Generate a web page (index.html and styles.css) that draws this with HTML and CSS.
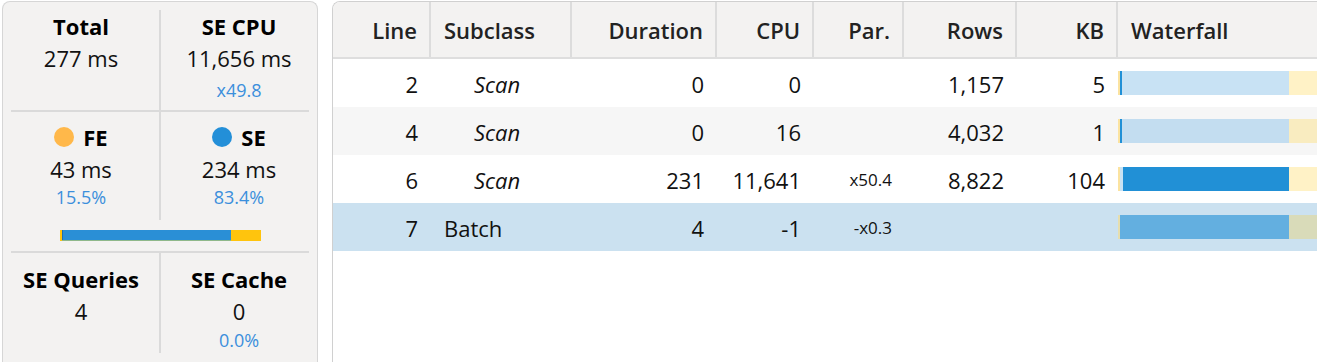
FILE: index.html
```html
<!DOCTYPE html>
<html lang="en">
<head>
<meta charset="utf-8">
<title>Server Timings</title>
<link rel="stylesheet" href="styles.css">
</head>
<body>
<div class="page">
  <section class="summary">
    <div class="stat-row row-top">
      <div class="stat">
        <div class="label">Total</div>
        <div class="value">277 ms</div>
      </div>
      <div class="stat">
        <div class="label">SE CPU</div>
        <div class="value">11,656 ms</div>
        <div class="sub sub-gap">x49.8</div>
      </div>
    </div>
    <div class="hsep"></div>
    <div class="stat-row row-mid">
      <div class="stat">
        <div class="label"><span class="dot dot-fe"></span>FE</div>
        <div class="value">43 ms</div>
        <div class="sub">15.5%</div>
      </div>
      <div class="stat">
        <div class="label"><span class="dot dot-se"></span>SE</div>
        <div class="value">234 ms</div>
        <div class="sub">83.4%</div>
      </div>
    </div>
    <div class="ratio">
      <span class="ratio-fe" style="width:2px"></span>
      <span class="ratio-se" style="width:169px"></span>
      <span class="ratio-fe ratio-rest"></span>
    </div>
    <div class="hsep"></div>
    <div class="stat-row row-bot">
      <div class="stat">
        <div class="label">SE Queries</div>
        <div class="value">4</div>
      </div>
      <div class="stat">
        <div class="label">SE Cache</div>
        <div class="value">0</div>
        <div class="sub sub-tight">0.0%</div>
      </div>
    </div>
  </section>

  <section class="grid-panel">
    <div class="thead">
      <div class="th num">Line</div>
      <div class="th">Subclass</div>
      <div class="th num">Duration</div>
      <div class="th num">CPU</div>
      <div class="th num">Par.</div>
      <div class="th num">Rows</div>
      <div class="th num">KB</div>
      <div class="th last">Waterfall</div>
    </div>

    <div class="tr">
      <div class="td num">2</div>
      <div class="td sub-scan">Scan</div>
      <div class="td num">0</div>
      <div class="td num">0</div>
      <div class="td num par"></div>
      <div class="td num">1,157</div>
      <div class="td num">5</div>
      <div class="td wfcell">
        <div class="wf"><span class="wf-fe" style="width:2px"></span><span class="wf-span" style="width:169px"><span class="wf-se" style="width:2px"></span></span></div>
      </div>
    </div>

    <div class="tr alt">
      <div class="td num">4</div>
      <div class="td sub-scan">Scan</div>
      <div class="td num">0</div>
      <div class="td num">16</div>
      <div class="td num par"></div>
      <div class="td num">4,032</div>
      <div class="td num">1</div>
      <div class="td wfcell">
        <div class="wf"><span class="wf-fe" style="width:2px"></span><span class="wf-span" style="width:169px"><span class="wf-se" style="width:2px"></span></span></div>
      </div>
    </div>

    <div class="tr">
      <div class="td num">6</div>
      <div class="td sub-scan">Scan</div>
      <div class="td num">231</div>
      <div class="td num">11,641</div>
      <div class="td num par">x50.4</div>
      <div class="td num">8,822</div>
      <div class="td num">104</div>
      <div class="td wfcell">
        <div class="wf"><span class="wf-fe" style="width:2px"></span><span class="wf-span" style="width:169px"><span class="wf-se" style="width:166px;margin-left:3px"></span></span></div>
      </div>
    </div>

    <div class="tr sel">
      <div class="td num">7</div>
      <div class="td">Batch</div>
      <div class="td num">4</div>
      <div class="td num">-1</div>
      <div class="td num par">-x0.3</div>
      <div class="td num"></div>
      <div class="td num"></div>
      <div class="td wfcell">
        <div class="wf"><span class="wf-fe" style="width:2px"></span><span class="wf-span" style="width:169px"></span></div>
      </div>
    </div>
  </section>
</div>
</body>
</html>
```

FILE: styles.css
```css
html, body {
  height: 100%;
}
body {
  margin: 0;
  padding: 1px 0 0 2px;
  box-sizing: border-box;
  background: #ffffff;
  font-family: "Open Sans", "Noto Sans", "DejaVu Sans", sans-serif;
  color: #111111;
  overflow: hidden;
}

.page {
  display: flex;
  align-items: flex-start;
  gap: 14px;
}

/* ---------- summary panel ---------- */
.summary {
  flex: none;
  width: 316px;
  height: 361px;
  box-sizing: border-box;
  border: 1px solid #d6d6d6;
  border-bottom: none;
  border-radius: 8px 8px 0 0;
  background: #f3f2f1;
}

.stat-row {
  display: flex;
}
.stat {
  flex: 1;
  text-align: center;
}
.stat + .stat {
  border-left: 2px solid #dadada;
}

.row-top { padding-top: 8px; }
.row-top .stat { padding-bottom: 8px; }
.row-mid .stat { padding-top: 9px; padding-bottom: 11px; }
.row-bot .stat { padding-top: 10px; padding-bottom: 1px; }

.label {
  font-size: 22px;
  line-height: 32px;
  font-weight: 700;
  color: #000;
  display: flex;
  justify-content: center;
  align-items: center;
  gap: 9px;
}
.value {
  font-size: 22px;
  line-height: 32px;
  color: #111;
}
.sub {
  font-size: 18px;
  line-height: 24px;
  color: #3b8fdc;
}
.sub-gap { margin-top: 4px; }
.sub-tight { margin-top: 1px; }

.dot {
  width: 20px;
  height: 20px;
  border-radius: 50%;
  flex: none;
}
.dot-fe { background: #ffb84a; }
.dot-se { background: #238fd8; }

.hsep {
  height: 2px;
  margin: 0 8px;
  background: #dadada;
}

.ratio {
  display: flex;
  width: 201px;
  height: 11px;
  margin: 10px auto;
}
.ratio-fe {
  background: #ffc40d;
}
.ratio-se {
  background: #2a8fd6;
  box-shadow: inset 0 -1px 0 #8fb88a, inset 1px 0 0 #1f6fb0;
}
.ratio-rest {
  flex: 1;
}

/* ---------- grid panel ---------- */
.grid-panel {
  flex: none;
  width: 1010px;
  height: 361px;
  box-sizing: border-box;
  border: 1px solid #d0d0d0;
  border-right: none;
  border-bottom: none;
  border-radius: 8px 0 0 0;
  background: #ffffff;
  overflow: hidden;
}

.thead,
.tr {
  display: grid;
  grid-template-columns: 98px 141px 145px 97px 90px 113px 101px 1fr;
}

.thead {
  height: 57px;
  box-sizing: border-box;
  background: #f3f2f1;
  border-bottom: 2px solid #dedede;
}
.th {
  display: flex;
  align-items: center;
  padding: 1px 12px 0 13px;
  border-right: 2px solid #dcdcdc;
  font-size: 22px;
  line-height: 30px;
  font-weight: 600;
  color: #222;
  white-space: nowrap;
}
.th.num {
  justify-content: flex-end;
}
.th.last {
  border-right: none;
}

.tr {
  height: 48px;
  background: #ffffff;
}
.tr.alt { background: #f6f6f6; }
.tr.sel { background: #cbe1f0; }

.td {
  display: flex;
  align-items: center;
  padding: 2px 13px 0 13px;
  font-size: 22px;
  line-height: 30px;
  color: #111;
  white-space: nowrap;
}
.td.num {
  justify-content: flex-end;
}
.td.par {
  font-size: 17px;
  padding-right: 12px;
}
.sub-scan {
  font-style: italic;
  padding-left: 43px;
}

.wfcell {
  padding: 0;
}
.wf {
  display: flex;
  width: 100%;
  height: 24px;
  background: #fff2c6;
}
.wf-fe {
  flex: none;
  background: #fbe3a0;
}
.wf-span {
  flex: none;
  display: flex;
  background: #c8e2f4;
}
.wf-se {
  flex: none;
  background: #2190d6;
}

.tr.alt .wf { background: #f9ecc0; }
.tr.alt .wf-span { background: #c3ddf0; }
.tr.sel .wf { background: #d9dbb9; }
.tr.sel .wf-fe { background: #e6deae; }
.tr.sel .wf-span { background: #63afe0; }
```
